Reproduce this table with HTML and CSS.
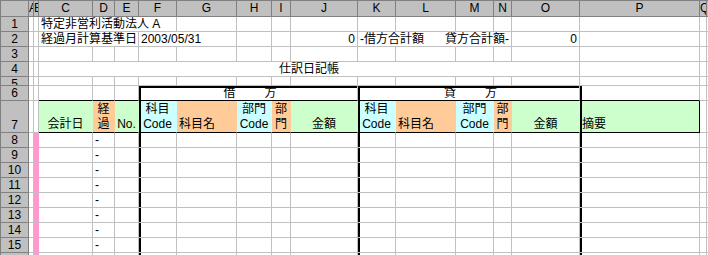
FILE: index.html
```html
<!DOCTYPE html>
<html lang="ja">
<head>
    <meta charset="UTF-8">
    <title>仕訳日記帳</title>
    <link rel="stylesheet" href="styles.css">
</head>
<body>

    <div class="sheet" id="sheet">
        <!-- Column headers -->
        <div class="hd"></div>
        <div class="hd">A</div>
        <div class="hd">B</div>
        <div class="hd">C</div>
        <div class="hd">D</div>
        <div class="hd">E</div>
        <div class="hd">F</div>
        <div class="hd">G</div>
        <div class="hd">H</div>
        <div class="hd">I</div>
        <div class="hd">J</div>
        <div class="hd">K</div>
        <div class="hd">L</div>
        <div class="hd">M</div>
        <div class="hd">N</div>
        <div class="hd">O</div>
        <div class="hd">P</div>
        <div class="hd">Q</div>
        <div class="hd">R</div>

        <!-- Row 1 -->
        <div class="rh">1</div>
        <div class="c"></div>
        <div class="c"></div>
        <div class="c span-4">特定非営利活動法人 A</div>
        <div class="c"></div>
        <div class="c"></div>
        <div class="c"></div>
        <div class="c"></div>
        <div class="c"></div>
        <div class="c"></div>
        <div class="c"></div>
        <div class="c"></div>
        <div class="c"></div>
        <div class="c"></div>
        <div class="c"></div>
        <div class="c"></div>

        <!-- Row 2 -->
        <div class="rh">2</div>
        <div class="c"></div>
        <div class="c"></div>
        <div class="c span-3">経過月計算基準日</div>
        <div class="c span-2">2003/05/31</div>
        <div class="c"></div>
        <div class="c"></div>
        <div class="c num">0</div>
        <div class="c span-2 no-r">-借方合計額</div>
        <div class="c span-2 num">貸方合計額-</div>
        <div class="c num">0</div>
        <div class="c"></div>
        <div class="c"></div>
        <div class="c"></div>

        <!-- Row 3 -->
        <div class="rh">3</div>
        <div class="c"></div><div class="c"></div><div class="c"></div><div class="c"></div>
        <div class="c"></div><div class="c"></div><div class="c"></div><div class="c"></div>
        <div class="c"></div><div class="c"></div><div class="c"></div><div class="c"></div>
        <div class="c"></div><div class="c"></div><div class="c"></div><div class="c"></div>
        <div class="c"></div><div class="c"></div>

        <!-- Row 4: title centred across C:O -->
        <div class="rh">4</div>
        <div class="c"></div>
        <div class="c"></div>
        <div class="c span-13 center">仕訳日記帳</div>
        <div class="c"></div>
        <div class="c"></div>
        <div class="c"></div>

        <!-- Row 5 (short) -->
        <div class="rh">5</div>
        <div class="c"></div><div class="c"></div><div class="c"></div><div class="c"></div>
        <div class="c"></div><div class="c"></div><div class="c"></div><div class="c"></div>
        <div class="c"></div><div class="c"></div><div class="c"></div><div class="c"></div>
        <div class="c"></div><div class="c"></div><div class="c"></div><div class="c"></div>
        <div class="c"></div><div class="c"></div>

        <!-- Row 6: debit / credit group titles -->
        <div class="rh">6</div>
        <div class="c"></div>
        <div class="c"></div>
        <div class="c under"></div>
        <div class="c under"></div>
        <div class="c under"></div>
        <div class="c span-5 under group"><span>借</span><span>方</span></div>
        <div class="c span-5 under group"><span>貸</span><span>方</span></div>
        <div class="c under thick"></div>
        <div class="c"></div>
        <div class="c"></div>

        <!-- Row 7: column titles -->
        <div class="rh rh-tall">7</div>
        <div class="c"></div>
        <div class="c"></div>
        <div class="c h7 green center">会計日</div>
        <div class="c h7 orange center">経<br>過</div>
        <div class="c h7 green center">No.</div>
        <div class="c h7 cyan center thick">科目<br>Code</div>
        <div class="c h7 orange">科目名</div>
        <div class="c h7 cyan center">部門<br>Code</div>
        <div class="c h7 orange center">部<br>門</div>
        <div class="c h7 green center">金額</div>
        <div class="c h7 cyan center thick">科目<br>Code</div>
        <div class="c h7 orange">科目名</div>
        <div class="c h7 cyan center">部門<br>Code</div>
        <div class="c h7 orange center">部<br>門</div>
        <div class="c h7 green center">金額</div>
        <div class="c h7 green thick last">摘要</div>
        <div class="c"></div>
        <div class="c"></div>
    </div>

    <script>
        // Empty entry rows 8-16
        const sheet = document.getElementById("sheet");

        for (let row = 8; row <= 16; row++) {
            let html = `<div class="rh">${row}</div>`;
            html += `<div class="c"></div>`;
            html += `<div class="c pink"></div>`;
            html += `<div class="c"></div>`;
            html += `<div class="c">-</div>`;
            html += `<div class="c"></div>`;
            for (let col = 0; col < 2; col++) {
                html += `<div class="c thick"></div>`; // 科目Code
                html += `<div class="c"></div>`;
                html += `<div class="c"></div>`;
                html += `<div class="c"></div>`;
                html += `<div class="c"></div>`;
            }
            html += `<div class="c thick"></div>`; // 摘要
            html += `<div class="c"></div>`;
            html += `<div class="c"></div>`;
            sheet.insertAdjacentHTML("beforeend", html);
        }
    </script>

</body>
</html>
```

FILE: styles.css
```css
* {
    box-sizing: border-box;
    margin: 0;
    padding: 0;
}

body {
    background: #fff;
    color: #000;
    font-family: "Liberation Sans", "Noto Sans CJK JP", sans-serif;
    font-size: 12px;
    overflow: hidden;
}

/* Worksheet grid */
.sheet {
    display: grid;
    grid-template-columns: 28px 5px 5px 54px 22px 24px 38px 60px 35px 19px 67px 38px 60px 38px 18px 68px 120px 7px 60px;
    grid-template-rows: 16px 15px 15px 15px 15px 9px 15px 32px repeat(9, 15px);
    width: max-content;
    border-top: 1px solid #808080;
    border-left: 1px solid #808080;
}

/* Headers */
.hd,
.rh {
    background: #c0c0c0;
    border-right: 1px solid #808080;
    border-bottom: 1px solid #808080;
    text-align: center;
    overflow: hidden;
    white-space: nowrap;
}

.hd {
    line-height: 15px;
}

.rh {
    line-height: 14px;
}

.rh-tall {
    display: flex;
    align-items: flex-end;
    justify-content: center;
}

/* Cells */
.c {
    border-right: 1px solid #c0c0c0;
    border-bottom: 1px solid #c0c0c0;
    padding: 0 2px;
    line-height: 14px;
    white-space: nowrap;
}

.span-2 { grid-column: span 2; }
.span-3 { grid-column: span 3; }
.span-4 { grid-column: span 4; }
.span-5 { grid-column: span 5; }
.span-13 { grid-column: span 13; }

.center {
    text-align: center;
}

.num {
    display: flex;
    justify-content: flex-end;
}

.no-r {
    border-right-color: transparent;
}

/* Borders of the journal table */
.under {
    border-bottom-color: #000;
}

.thick {
    box-shadow: inset 2px 0 0 #000;
}

.group {
    display: flex;
    justify-content: center;
    gap: 29px;
    padding-left: 6px;
    box-shadow: inset 2px 2px 0 #000;
}

/* Title row */
.h7 {
    display: flex;
    flex-direction: column;
    justify-content: flex-end;
    line-height: 15px;
    border-bottom-color: #000;
}

.h7.center {
    align-items: center;
}

.green {
    background: #ccffcc;
    border-right-color: #ccffcc;
}

.orange {
    background: #ffcc99;
    border-right-color: #ffcc99;
}

.cyan {
    background: #ccffff;
    border-right-color: #ccffff;
}

.last {
    border-right-color: #000;
}

.pink {
    background: #ff99cc;
    border-right-color: #ff99cc;
}
```
